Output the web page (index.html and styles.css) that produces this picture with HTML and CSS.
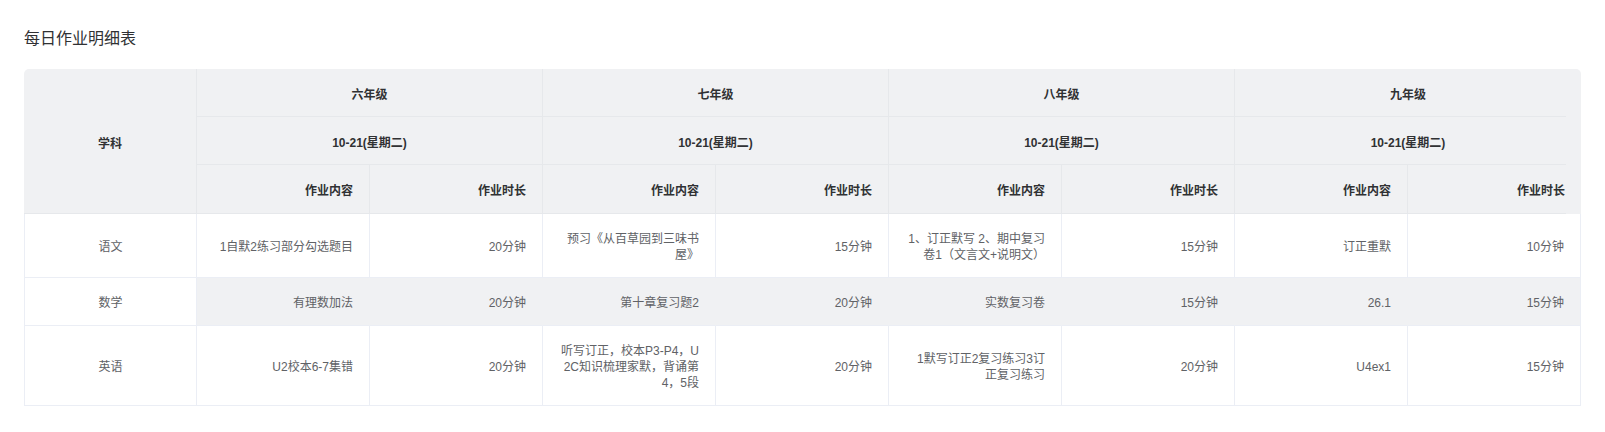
FILE: index.html
```html
<!DOCTYPE html>
<html lang="zh-CN">
<head>
<meta charset="utf-8">
<title>每日作业明细表</title>
<link rel="stylesheet" href="styles.css">
</head>
<body>
<div class="page">
  <h1 class="title">每日作业明细表</h1>
  <div class="table-wrap">
    <table class="hw-table">
      <colgroup>
        <col><col><col><col><col><col><col><col><col>
      </colgroup>
      <thead>
        <tr>
          <th class="subject-head" rowspan="3">学科</th>
          <th class="center" colspan="2">六年级</th>
          <th class="center" colspan="2">七年级</th>
          <th class="center" colspan="2">八年级</th>
          <th class="center end" colspan="2">九年级</th>
        </tr>
        <tr>
          <th class="center" colspan="2">10-21(星期二)</th>
          <th class="center" colspan="2">10-21(星期二)</th>
          <th class="center" colspan="2">10-21(星期二)</th>
          <th class="center end" colspan="2">10-21(星期二)</th>
        </tr>
        <tr class="sub">
          <th>作业内容</th>
          <th>作业时长</th>
          <th>作业内容</th>
          <th>作业时长</th>
          <th>作业内容</th>
          <th>作业时长</th>
          <th>作业内容</th>
          <th class="end">作业时长</th>
        </tr>
      </thead>
      <tbody>
        <tr>
          <td class="subject">语文</td>
          <td>1自默2练习部分勾选题目</td>
          <td>20分钟</td>
          <td>预习《从百草园到三味书屋》</td>
          <td>15分钟</td>
          <td>1、订正默写 2、期中复习卷1（文言文+说明文）</td>
          <td>15分钟</td>
          <td>订正重默</td>
          <td class="last">10分钟</td>
        </tr>
        <tr class="stripe">
          <td class="subject">数学</td>
          <td>有理数加法</td>
          <td>20分钟</td>
          <td>第十章复习题2</td>
          <td>20分钟</td>
          <td>实数复习卷</td>
          <td>15分钟</td>
          <td>26.1</td>
          <td class="last">15分钟</td>
        </tr>
        <tr>
          <td class="subject">英语</td>
          <td>U2校本6-7集错</td>
          <td>20分钟</td>
          <td>听写订正，校本P3-P4，U2C知识梳理家默，背诵第4，5段</td>
          <td>20分钟</td>
          <td>1默写订正2复习练习3订正复习练习</td>
          <td>20分钟</td>
          <td>U4ex1</td>
          <td class="last">15分钟</td>
        </tr>
      </tbody>
    </table>
  </div>
</div>
</body>
</html>
```

FILE: styles.css
```css
html, body {
  margin: 0;
  padding: 0;
  background: #ffffff;
}

body {
  font-family: "Liberation Sans", "Noto Sans CJK SC", sans-serif;
}

.page {
  padding: 27px 24px 0 24px;
}

.title {
  margin: 0 0 18px 0;
  font-size: 16px;
  line-height: 24px;
  font-weight: normal;
  color: #303133;
}

.table-wrap {
  border-radius: 5px 5px 0 0;
  overflow: hidden;
}

.hw-table {
  width: 100%;
  table-layout: fixed;
  border-collapse: separate;
  border-spacing: 0;
  font-size: 12px;
  line-height: 16px;
}

.hw-table th,
.hw-table td {
  padding: 17px 16px 14px 17.5px;
  text-align: right;
  word-break: break-all;
  vertical-align: middle;
}

.hw-table th {
  padding-top: 18px;
  padding-bottom: 13px;
  background: #f0f1f3;
  color: #303133;
  font-weight: bold;
  border-right: 1px solid #e6e8eb;
  border-bottom: 1px solid #e6e8eb;
}

.hw-table th.center,
.hw-table th.subject-head {
  text-align: center;
  padding-left: 16px;
}

.hw-table thead tr.sub th {
  padding-bottom: 14px;
}

.hw-table th.end {
  border-right: none;
  border-bottom: none;
  padding-bottom: 14px;
  background-image: linear-gradient(#e6e8eb, #e6e8eb);
  background-repeat: no-repeat;
  background-position: left bottom;
  background-size: calc(100% - 15px) 1px;
}

.hw-table thead tr.sub th.end {
  padding-bottom: 15px;
}

.hw-table td {
  color: #606266;
  background: #ffffff;
  border-right: 1px solid #ebeef5;
  border-bottom: 1px solid #ebeef5;
}

.hw-table td.subject {
  text-align: center;
  padding-left: 16px;
  border-left: 1px solid #ebeef5;
}

.hw-table tr.stripe td {
  background: #f0f1f3;
  border-right-color: #f0f1f3;
}

.hw-table tr.stripe td.subject {
  background: #ffffff;
  border-right-color: #ebeef5;
}

.hw-table tr.stripe td.last {
  border-right-color: #ebeef5;
}
```
